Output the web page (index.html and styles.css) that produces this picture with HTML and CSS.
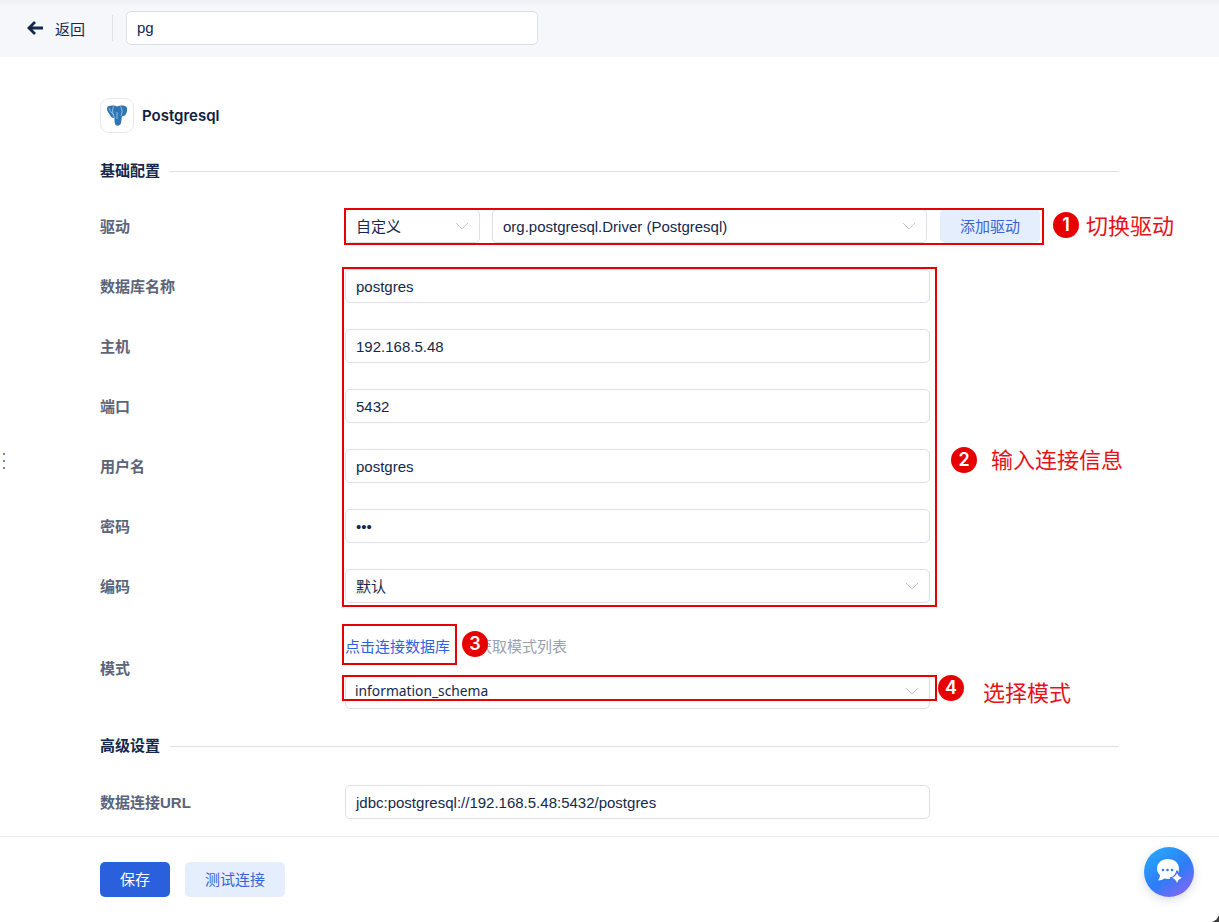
FILE: index.html
```html
<!DOCTYPE html>
<html lang="zh-CN">
<head>
<meta charset="utf-8">
<title>Postgresql</title>
<link rel="stylesheet" href="styles.css">
</head>
<body>
<div class="app">
  <header class="topbar">
    <div class="back">
      <svg class="back-icon" width="18" height="16" viewBox="0 0 18 16"><path d="M17 8H4M9 2L3 8l6 6" fill="none" stroke="#14284b" stroke-width="2.800"/></svg>
      <span>返回</span>
    </div>
    <div class="topbar-sep"></div>
    <div class="name-input">pg</div>
  </header>

  <main class="content">
    <div class="db-head">
      <div class="db-logo">
        <svg width="22" height="21" viewBox="0 0 22 21">
          <path d="M3 1C6 0 9 .5 11 1.500 14 0 18 0 20 1.500c2 2 1 5.500 0 7.500-1 2-2.500 2-4 2.500-.5 1.500-.5 4.500-1 6.500-.5 2.500-3 3-4.500 2.500-1.500-.5-2-2.500-2-5.500V13c-2 .5-3.500-1-4.500-3C2.500 8 .5 5 1 3c.2-1 1-1.700 2-2z" fill="#2f75b5"/>
          <path d="M7.500 1.500c-1.500 3-1 8 1 11.500M14.500 1.500c2 3 2 6 .5 9.500M3 3c1 3 2.500 5 5 7M11 7v7" fill="none" stroke="#a9cdec" stroke-width=".8"/>
        </svg>
      </div>
      <div class="db-name">Postgresql</div>
    </div>

    <div class="section-title"><span class="section-text">基础配置</span><i class="section-line"></i></div>

    <div class="form-row">
      <label class="form-label">驱动</label>
      <div class="driver-group">
        <div class="control select driver-type">自定义<svg class="chev chev-light" width="14" height="8" viewBox="0 0 14 8"><path d="M1 1l6 6 6-6" fill="none" stroke="currentColor" stroke-width="1"/></svg></div>
        <div class="control select driver-class">org.postgresql.Driver (Postgresql)<svg class="chev chev-light" width="14" height="8" viewBox="0 0 14 8"><path d="M1 1l6 6 6-6" fill="none" stroke="currentColor" stroke-width="1"/></svg></div>
        <button class="btn btn-soft btn-add">添加驱动</button>
      </div>
    </div>

    <div class="form-row"><label class="form-label">数据库名称</label><div class="control field">postgres</div></div>
    <div class="form-row"><label class="form-label">主机</label><div class="control field">192.168.5.48</div></div>
    <div class="form-row"><label class="form-label">端口</label><div class="control field">5432</div></div>
    <div class="form-row"><label class="form-label">用户名</label><div class="control field">postgres</div></div>
    <div class="form-row"><label class="form-label">密码</label><div class="control field">•••</div></div>
    <div class="form-row"><label class="form-label">编码</label><div class="control field select">默认<svg class="chev" width="14" height="8" viewBox="0 0 14 8"><path d="M1 1l6 6 6-6" fill="none" stroke="currentColor" stroke-width="1"/></svg></div></div>

    <div class="mode-row">
      <label class="form-label">模式</label>
      <div class="mode-body">
        <div class="mode-links"><span class="link">点击连接数据库</span><span class="muted">获取模式列表</span></div>
        <div class="control field select schema">information_schema<svg class="chev" width="14" height="8" viewBox="0 0 14 8"><path d="M1 1l6 6 6-6" fill="none" stroke="currentColor" stroke-width="1"/></svg></div>
      </div>
    </div>

    <div class="section-title adv"><span class="section-text">高级设置</span><i class="section-line"></i></div>

    <div class="form-row url-row"><label class="form-label">数据连接URL</label><div class="control field">jdbc:postgresql://192.168.5.48:5432/postgres</div></div>
  </main>

  <footer class="footer">
    <button class="btn btn-primary">保存</button>
    <button class="btn btn-soft btn-test">测试连接</button>
  </footer>

  <div class="handle"><i></i><i></i><i></i></div>

  <div class="chat-fab">
    <svg width="32" height="32" viewBox="0 0 32 32">
      <path d="M15 3C9 3 4 6.800 4 12.500c0 2.800 1 5 3 6.700-.1 1.700-.6 3.300-2 5.300 2.500 0 5-.8 6.500-2 1.200.3 2.300.5 3.500.5 6.500 0 11-3.900 11-10.500C26 6.800 21 3 15 3z" fill="#fff"/>
      <circle cx="10" cy="14" r="1.300" fill="#2f7bf0"/><circle cx="14.500" cy="14" r="1.300" fill="#2f7bf0"/><circle cx="19" cy="14" r="1.300" fill="#2f7bf0"/>
      <path d="M24 14.500c.8 4.500 2.700 6.700 7 7.500-4.300.8-6.200 3-7 7.500-.8-4.500-2.700-6.700-7-7.500 4.300-.8 6.200-3 7-7.500z" fill="#fff" stroke="#4a72f2" stroke-width="1.400"/>
    </svg>
  </div>

  <div class="mark mark-driver"></div>
  <div class="mark mark-conn"></div>
  <div class="mark mark-link"></div>
  <div class="mark mark-schema"></div>
  <div class="badge badge-1">1</div>
  <div class="badge badge-2">2</div>
  <div class="badge badge-3">3</div>
  <div class="badge badge-4">4</div>
  <div class="note note-1">切换驱动</div>
  <div class="note note-2">输入连接信息</div>
  <div class="note note-3">选择模式</div>
</div>
</body>
</html>
```

FILE: styles.css
```css
* { box-sizing: border-box; }
html, body { margin: 0; padding: 0; height: 100%; background: #3c3c3c; }
body {
  font-family: "Liberation Sans", "Noto Sans CJK SC", sans-serif;
  font-size: 15px;
  color: #14284b;
  overflow: hidden;
}
.app {
  position: relative;
  width: 1219px;
  height: 922px;
  display: flex;
  flex-direction: column;
  overflow: hidden;
  background: #fff;
  border-bottom-right-radius: 9px;
}
.topbar {
  height: 57px;
  flex: none;
  display: flex;
  align-items: center;
  padding: 0 0 1px 26px;
  background: linear-gradient(#eff0f3 0, #f5f7fb 7px);
}
.back { display: flex; align-items: center; gap: 11px; width: 86px; color: #14284b; }
.back-icon { flex: none; }
.topbar-sep { width: 1px; height: 26px; background: #dfe2e9; }
.name-input {
  margin-left: 13px;
  width: 412px;
  height: 34px;
  line-height: 32px;
  padding-left: 10px;
  background: #fff;
  border: 1px solid #dcdfe8;
  border-radius: 5px;
  color: #14284b;
  font-size: 15px;
}
.content { flex: 1; padding: 41px 100px 0; min-height: 0; }
.db-head { display: flex; align-items: center; gap: 8px; height: 35px; }
.db-logo {
  width: 34px;
  height: 35px;
  border: 1px solid #e7e9f0;
  border-radius: 9px;
  display: flex;
  align-items: center;
  justify-content: center;
}
.db-name { font-family: Inter, "Liberation Sans", sans-serif; font-weight: 600; font-size: 15px; color: #0f2040; }
.section-title {
  display: flex;
  align-items: center;
  gap: 10px;
  height: 20px;
  margin-top: 28px;
  margin-bottom: 15px;
  font-weight: 700;
  font-size: 15px;
  color: #14284b;
}
.section-text { margin-bottom: 4px; }
.section-line { flex: 1; height: 1px; background: #dddfe9; }
.form-row { display: flex; align-items: center; height: 60px; }
.form-label { flex: none; width: 245px; margin-bottom: 2px; font-weight: 700; font-size: 15px; color: #5b6478; }
.control {
  height: 34px;
  line-height: 33px;
  padding-left: 10px;
  background: #fff;
  border: 1px solid #dcdfe8;
  border-radius: 5px;
  color: #14284b;
  font-size: 15px;
}
.field { width: 585px; }
.select { display: flex; align-items: center; justify-content: space-between; padding-right: 10px; }
.chev { color: #b9bdc8; flex: none; }
.chev-light { color: #c5c9d3; }
.driver-group { display: flex; align-items: center; }
.driver-type { width: 135px; }
.driver-class { width: 435px; margin-left: 12px; }
.btn {
  border: 0;
  border-radius: 5px;
  font-family: inherit;
  font-size: 15px;
  cursor: pointer;
  padding: 0 0 2px;
}
.btn-add { width: 100px; height: 34px; margin-left: 13px; }
.btn-soft { background: #e5eefd; color: #3a63d8; }
.btn-primary { background: #2b60dc; color: #fff; width: 70px; height: 35px; }
.btn-test { width: 100px; height: 35px; margin-left: 15px; }
.mode-row { display: flex; align-items: center; margin-top: 14px; height: 78px; }
.mode-row .form-label { margin-bottom: 4px; }
.mode-body { display: flex; flex-direction: column; }
.mode-links { height: 45px; padding-top: 6px; line-height: 22px; display: flex; gap: 27px; font-size: 15px; }
.link { color: #2f62e0; }
.muted { color: #9aa1ae; }
.schema {
  line-height: 30px;
  align-items: flex-start;
  padding-left: 9px;
  font-family: "Noto Sans", "Liberation Sans", sans-serif;
  font-size: 13.800px;
}
.schema .chev { margin-top: 11px; }
.adv { margin-top: 28px; margin-bottom: 16px; }
.footer {
  height: 86px;
  flex: none;
  display: flex;
  align-items: flex-start;
  padding: 25px 0 0 100px;
  border-top: 1px solid #e9eaf2;
  background: #fff;
}
.handle { position: absolute; left: 3px; top: 453px; display: flex; flex-direction: column; gap: 5px; }
.handle i { width: 2px; height: 2px; background: #6f86b4; display: block; }
.chat-fab {
  position: absolute;
  left: 1144px;
  top: 847px;
  width: 50px;
  height: 50px;
  border-radius: 50%;
  background: linear-gradient(145deg, #27a8fb 8%, #2e7cf6 55%, #8f63f5 95%);
  box-shadow: 0 3px 10px rgba(40, 60, 110, .18);
  display: flex;
  align-items: center;
  justify-content: center;
}
.mark { position: absolute; border: 2px solid #e60000; }
.mark-driver { left: 344px; top: 208px; width: 700px; height: 37px; }
.mark-conn { left: 342px; top: 267px; width: 595px; height: 340px; }
.mark-link { left: 342px; top: 624px; width: 115px; height: 41px; }
.mark-schema { left: 342px; top: 675px; width: 595px; height: 26px; }
.badge {
  position: absolute;
  width: 26px;
  height: 26px;
  border-radius: 50%;
  background: #e60000;
  color: #fff;
  font-family: Inter, "Liberation Sans", sans-serif;
  font-weight: 600;
  font-size: 18px;
  line-height: 26px;
  text-align: center;
}
.badge-1 { left: 1053px; top: 212px; }
.badge-2 { left: 951px; top: 447px; }
.badge-3 { left: 462px; top: 631px; }
.badge-4 { left: 938px; top: 675px; }
.note { position: absolute; color: #e81018; font-size: 22px; line-height: 30px; white-space: nowrap; }
.note-1 { left: 1086px; top: 212px; }
.note-2 { left: 991px; top: 446px; }
.note-3 { left: 983px; top: 679px; }
```
